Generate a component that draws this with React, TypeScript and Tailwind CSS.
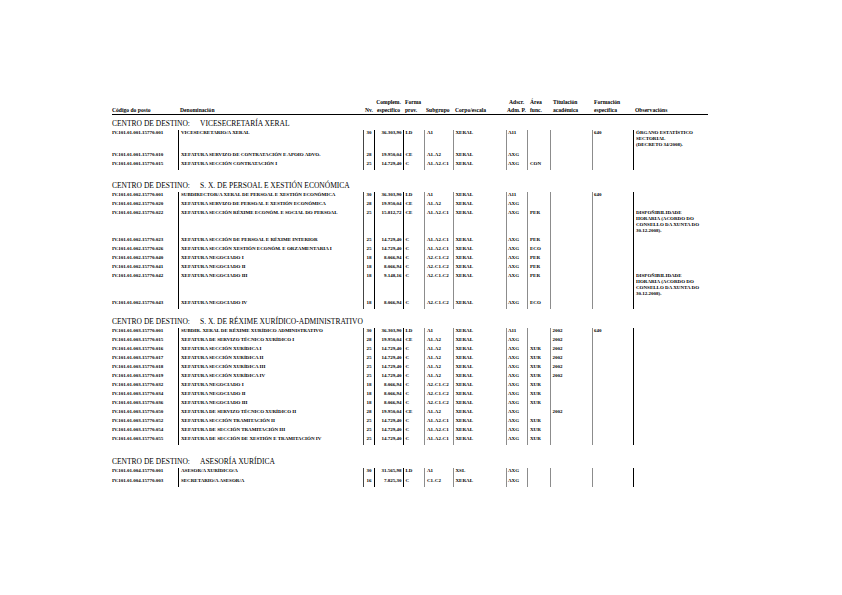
// Relación de postos de traballo: one page of the RPT table, grouped by centro de destino.

type Row = {
  code: string;
  name: string;
  nv: string;
  comp: string;
  forma: string;
  sub: string;
  corpo: string;
  adscr: string;
  area?: string;
  tit?: string;
  form?: string;
  obs?: string[];
  h?: string;
};

type Section = { title: string; mt: string; rows: Row[] };

const DISP = ['DISPOÑIBILIDADE', 'HORARIA (ACORDO DO', 'CONSELLO DA XUNTA DO', '30.12.2008).'];

const sections: Section[] = [
  {
    title: 'VICESECRETARÍA XERAL',
    mt: 'mt-[4px]',
    rows: [
      { code: 'IV.101.01.001.15770.001', name: 'VICESECRETARIO/A XERAL', nv: '30', comp: '36.303,90', forma: 'LD', sub: 'A1', corpo: 'XERAL', adscr: 'A11', form: '640', obs: ['ÓRGANO ESTATÍSTICO', 'SECTORIAL', '(DECRETO 34/2008).'], h: 'h-[22px]' },
      { code: 'IV.101.01.001.15770.010', name: 'XEFATURA SERVIZO DE CONTRATACIÓN E APOIO ADVO.', nv: '28', comp: '19.950,04', forma: 'CE', sub: 'A1-A2', corpo: 'XERAL', adscr: 'AXG' },
      { code: 'IV.101.01.001.15770.015', name: 'XEFATURA SECCIÓN CONTRATACIÓN I', nv: '25', comp: '14.729,40', forma: 'C', sub: 'A1-A2-C1', corpo: 'XERAL', adscr: 'AXG', area: 'CON' },
    ],
  },
  {
    title: 'S. X. DE PERSOAL E XESTIÓN ECONÓMICA',
    mt: 'mt-[11px]',
    rows: [
      { code: 'IV.101.01.002.15770.001', name: 'SUBDIRECTOR/A XERAL DE PERSOAL E XESTIÓN ECONÓMICA', nv: '30', comp: '36.303,90', forma: 'LD', sub: 'A1', corpo: 'XERAL', adscr: 'A11', form: '640' },
      { code: 'IV.101.01.002.15770.020', name: 'XEFATURA SERVIZO DE PERSOAL E XESTIÓN ECONÓMICA', nv: '28', comp: '19.950,04', forma: 'CE', sub: 'A1-A2', corpo: 'XERAL', adscr: 'AXG' },
      { code: 'IV.101.01.002.15770.022', name: 'XEFATURA SECCIÓN RÉXIME ECONÓM. E SOCIAL DO PERSOAL', nv: '25', comp: '15.812,72', forma: 'CE', sub: 'A1-A2-C1', corpo: 'XERAL', adscr: 'AXG', area: 'PER', obs: DISP, h: 'h-[27px]' },
      { code: 'IV.101.01.002.15770.023', name: 'XEFATURA SECCIÓN DE PERSOAL E RÉXIME INTERIOR', nv: '25', comp: '14.729,40', forma: 'C', sub: 'A1-A2-C1', corpo: 'XERAL', adscr: 'AXG', area: 'PER' },
      { code: 'IV.101.01.002.15770.026', name: 'XEFATURA SECCIÓN XESTIÓN ECONÓM. E ORZAMENTARIA I', nv: '25', comp: '14.729,40', forma: 'C', sub: 'A1-A2-C1', corpo: 'XERAL', adscr: 'AXG', area: 'ECO' },
      { code: 'IV.101.01.002.15770.040', name: 'XEFATURA NEGOCIADO I', nv: '18', comp: '8.066,94', forma: 'C', sub: 'A2-C1-C2', corpo: 'XERAL', adscr: 'AXG', area: 'PER' },
      { code: 'IV.101.01.002.15770.041', name: 'XEFATURA NEGOCIADO II', nv: '18', comp: '8.066,94', forma: 'C', sub: 'A2-C1-C2', corpo: 'XERAL', adscr: 'AXG', area: 'PER' },
      { code: 'IV.101.01.002.15770.042', name: 'XEFATURA NEGOCIADO III', nv: '18', comp: '9.148,16', forma: 'C', sub: 'A2-C1-C2', corpo: 'XERAL', adscr: 'AXG', area: 'PER', obs: DISP, h: 'h-[27px]' },
      { code: 'IV.101.01.002.15770.043', name: 'XEFATURA NEGOCIADO IV', nv: '18', comp: '8.066,94', forma: 'C', sub: 'A2-C1-C2', corpo: 'XERAL', adscr: 'AXG', area: 'ECO' },
    ],
  },
  {
    title: 'S. X. DE RÉXIME XURÍDICO-ADMINISTRATIVO',
    mt: 'mt-[8px]',
    rows: [
      { code: 'IV.101.01.003.15770.001', name: 'SUBDIR. XERAL DE RÉXIME XURÍDICO ADMINISTRATIVO', nv: '30', comp: '36.303,90', forma: 'LD', sub: 'A1', corpo: 'XERAL', adscr: 'A11', tit: '2002', form: '640' },
      { code: 'IV.101.01.003.15770.015', name: 'XEFATURA DE SERVIZO TÉCNICO XURÍDICO I', nv: '28', comp: '19.950,04', forma: 'CE', sub: 'A1-A2', corpo: 'XERAL', adscr: 'AXG', tit: '2002' },
      { code: 'IV.101.01.003.15770.016', name: 'XEFATURA SECCIÓN XURÍDICA I', nv: '25', comp: '14.729,40', forma: 'C', sub: 'A1-A2', corpo: 'XERAL', adscr: 'AXG', area: 'XUR', tit: '2002' },
      { code: 'IV.101.01.003.15770.017', name: 'XEFATURA SECCIÓN XURÍDICA II', nv: '25', comp: '14.729,40', forma: 'C', sub: 'A1-A2', corpo: 'XERAL', adscr: 'AXG', area: 'XUR', tit: '2002' },
      { code: 'IV.101.01.003.15770.018', name: 'XEFATURA SECCIÓN XURÍDICA III', nv: '25', comp: '14.729,40', forma: 'C', sub: 'A1-A2', corpo: 'XERAL', adscr: 'AXG', area: 'XUR', tit: '2002' },
      { code: 'IV.101.01.003.15770.019', name: 'XEFATURA SECCIÓN XURÍDICA IV', nv: '25', comp: '14.729,40', forma: 'C', sub: 'A1-A2', corpo: 'XERAL', adscr: 'AXG', area: 'XUR', tit: '2002' },
      { code: 'IV.101.01.003.15770.032', name: 'XEFATURA NEGOCIADO I', nv: '18', comp: '8.066,94', forma: 'C', sub: 'A2-C1-C2', corpo: 'XERAL', adscr: 'AXG', area: 'XUR' },
      { code: 'IV.101.01.003.15770.034', name: 'XEFATURA NEGOCIADO II', nv: '18', comp: '8.066,94', forma: 'C', sub: 'A2-C1-C2', corpo: 'XERAL', adscr: 'AXG', area: 'XUR' },
      { code: 'IV.101.01.003.15770.036', name: 'XEFATURA NEGOCIADO III', nv: '18', comp: '8.066,94', forma: 'C', sub: 'A2-C1-C2', corpo: 'XERAL', adscr: 'AXG', area: 'XUR' },
      { code: 'IV.101.01.003.15770.050', name: 'XEFATURA DE SERVIZO TÉCNICO XURÍDICO II', nv: '28', comp: '19.950,04', forma: 'CE', sub: 'A1-A2', corpo: 'XERAL', adscr: 'AXG', tit: '2002' },
      { code: 'IV.101.01.003.15770.052', name: 'XEFATURA SECCIÓN TRAMITACIÓN II', nv: '25', comp: '14.729,40', forma: 'C', sub: 'A1-A2-C1', corpo: 'XERAL', adscr: 'AXG', area: 'XUR' },
      { code: 'IV.101.01.003.15770.054', name: 'XEFATURA DE SECCIÓN TRAMITACIÓN III', nv: '25', comp: '14.729,40', forma: 'C', sub: 'A1-A2-C1', corpo: 'XERAL', adscr: 'AXG', area: 'XUR' },
      { code: 'IV.101.01.003.15770.055', name: 'XEFATURA DE SECCIÓN DE XESTIÓN E TRAMITACIÓN IV', nv: '25', comp: '14.729,40', forma: 'C', sub: 'A1-A2-C1', corpo: 'XERAL', adscr: 'AXG', area: 'XUR' },
    ],
  },
  {
    title: 'ASESORÍA XURÍDICA',
    mt: 'mt-[12px]',
    rows: [
      { code: 'IV.101.01.004.15770.001', name: 'ASESOR/A XURÍDICO/A', nv: '30', comp: '31.565,98', forma: 'LD', sub: 'A1', corpo: 'XSL', adscr: 'AXG', h: 'h-[10px]' },
      { code: 'IV.101.01.004.15770.003', name: 'SECRETARIO/A ASESOR/A', nv: '16', comp: '7.825,30', forma: 'C', sub: 'C1-C2', corpo: 'XERAL', adscr: 'AXG' },
    ],
  },
];

const grid =
  'grid grid-cols-[66px_185px_11px_29px_21px_29px_53px_21px_23px_42px_41px_75px]';
const soft = 'border-l border-[#8c8c8c]';

function TableRow({ r }: { r: Row }) {
  return (
    <div className={`${grid} ${r.h ?? 'h-[9px]'} text-[5px] leading-[6px] font-bold whitespace-nowrap`}>
      <div>{r.code}</div>
      <div className="border-l border-black pl-[2px] overflow-hidden">{r.name}</div>
      <div className="border-l border-[#444] text-center">{r.nv}</div>
      <div className="border-l border-black text-right pr-[1.5px]">{r.comp}</div>
      <div className="border-l border-black pl-[1.5px]">{r.forma}</div>
      <div className={`${soft} pl-[2px]`}>{r.sub}</div>
      <div className={`${soft} pl-[1.5px]`}>{r.corpo}</div>
      <div className={`${soft} pl-[1px]`}>{r.adscr}</div>
      <div className={`${soft} pl-[2px]`}>{r.area}</div>
      <div className={`${soft} pl-[1.5px]`}>{r.tit}</div>
      <div className={`${soft} pl-[1px]`}>{r.form}</div>
      <div className="border-l border-black pl-[2px]">
        {r.obs?.map((l) => (
          <div key={l}>{l}</div>
        ))}
      </div>
    </div>
  );
}

function Header() {
  const cell = 'flex flex-col justify-end';
  return (
    <div className={`${grid} h-[17px] border-b border-black text-[5.6px] leading-[8px] font-bold whitespace-nowrap`}>
      <div className={cell}>Código do posto</div>
      <div className={`${cell} pl-[2px]`}>Denominación</div>
      <div className={`${cell} pl-[2px]`}>Nv.</div>
      <div className={`${cell} items-center`}>
        <span>Complem.</span>
        <span>específico</span>
      </div>
      <div className={`${cell} pl-[2px]`}>
        <span>Forma</span>
        <span>prov.</span>
      </div>
      <div className={`${cell} pl-[2px]`}>Subgrupo</div>
      <div className={`${cell} pl-[2px]`}>Corpo/escala</div>
      <div className={`${cell} pl-[1px]`}>
        <span className="pl-[2px]">Adscr.</span>
        <span>Adm. P.</span>
      </div>
      <div className={`${cell} pl-[3px]`}>
        <span>Área</span>
        <span>func.</span>
      </div>
      <div className={`${cell} pl-[3px]`}>
        <span>Titulación</span>
        <span>académica</span>
      </div>
      <div className={`${cell} pl-[2px]`}>
        <span>Formación</span>
        <span>específica</span>
      </div>
      <div className={`${cell} pl-[2px]`}>Observacións</div>
    </div>
  );
}

export default function App() {
  return (
    <div className="w-[842px] h-[595px] overflow-hidden bg-white text-black pt-[98px] pl-[112px] font-['Liberation_Serif','Times_New_Roman',serif]">
      <div className="w-[596px]">
        <Header />
        {sections.map((s) => (
          <section key={s.title} className={s.mt}>
            <h2 className="flex h-[10px] text-[7.5px] leading-[10px] font-normal whitespace-nowrap font-['Liberation_Serif','Times_New_Roman',serif]">
              <span className="w-[88px]">CENTRO DE DESTINO:</span>
              <span>{s.title}</span>
            </h2>
            <div className="mt-[1px]">
              {s.rows.map((r) => (
                <TableRow key={r.code} r={r} />
              ))}
            </div>
          </section>
        ))}
      </div>
    </div>
  );
}
